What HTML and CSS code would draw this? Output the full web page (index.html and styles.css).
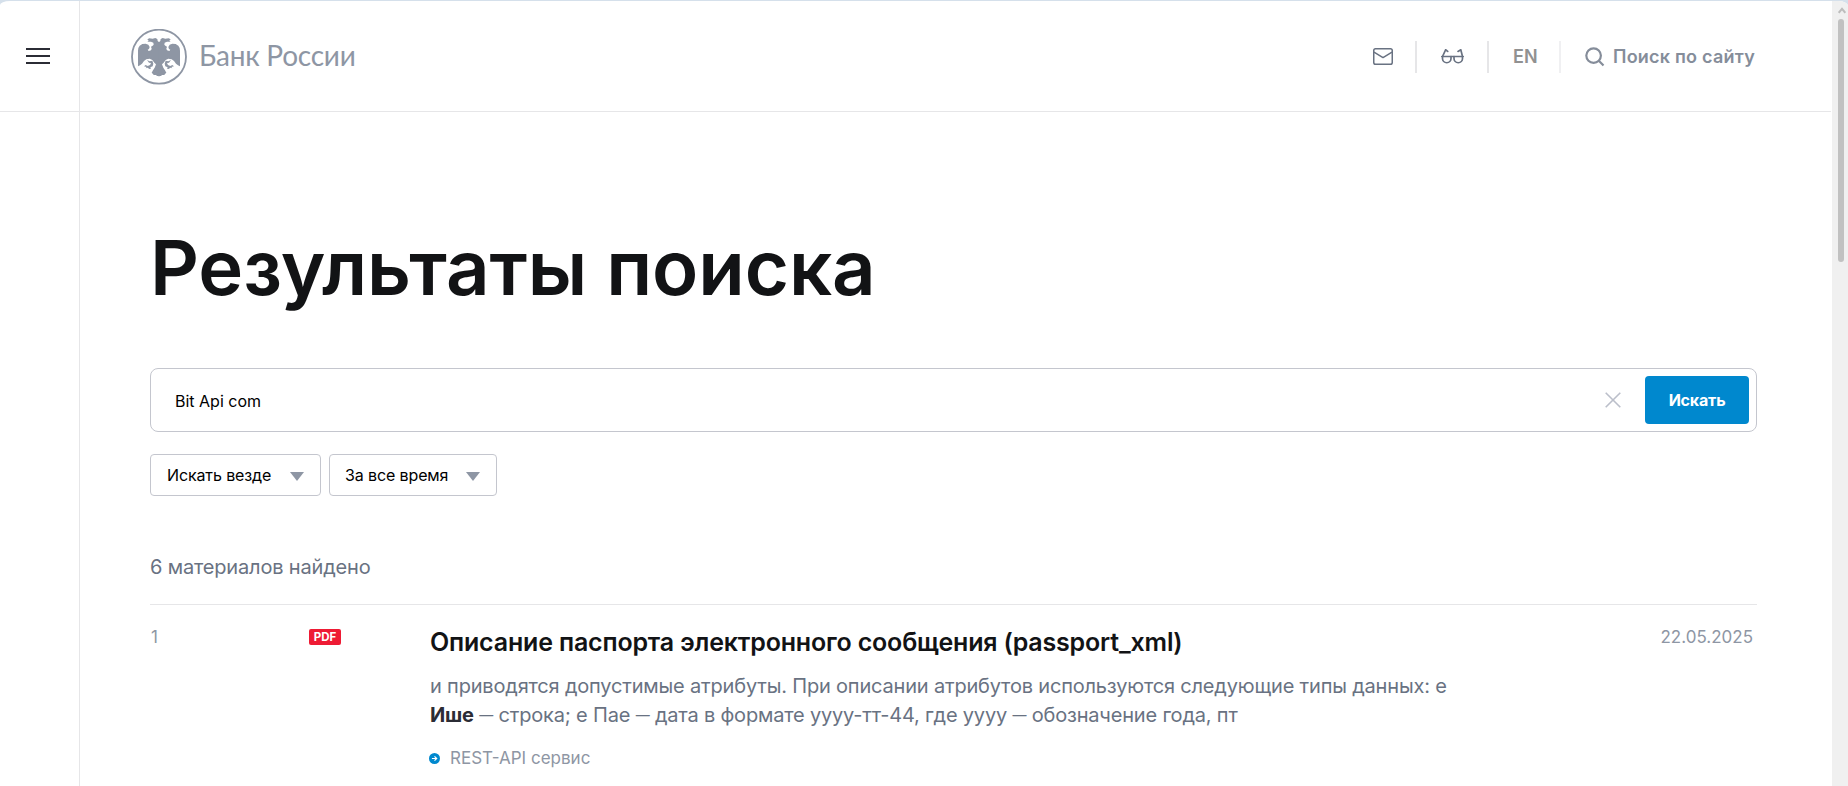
FILE: index.html
```html
<!DOCTYPE html>
<html lang="ru">
<head>
    <meta charset="UTF-8">
    <meta name="viewport" content="width=device-width, initial-scale=1.0">
    <title>Результаты поиска | Банк России</title>
    <link rel="stylesheet" href="styles.css">
</head>
<body>
    <div class="window">
        <aside class="sidebar">
            <button class="menu-button" aria-label="Меню">
                <span></span>
                <span></span>
                <span></span>
            </button>
        </aside>

        <div class="page">
            <header class="header">
                <a class="logo">
                    <svg class="logo-emblem" viewBox="0 0 168 168">
                        <circle cx="84" cy="83" r="81" fill="none" stroke="#8e96a4" stroke-width="5.5"/>
                        <g id="eagle-half" fill="#8e96a4">
                            <path d="M84.500 40 L80 36 79 30 73 27 65 29 55 28 49 31 53 35 49 38 60 38 67 41 68 47 64 51 60 53 62 59 60 64 53 66 50 62 54 60 56 54 52 47 44 44 34 45 26 50 22 57 21 65 21 112 27 109 33 104 39 96 46 91 56 89 64 93 70 101 75 106 71 116 66 124 62 131 66 135 68 138 74 138 79 141 84.500 142Z"/>
                            <path d="M48 93 L56 97 64 95 67 104 65 112 58 115 60 119 54 120 51 116 44 118 47 114 39 112 44 108 50 111 57 108 60 102 54 101Z"/>
                        </g>
                        <use href="#eagle-half" transform="translate(168 0) scale(-1 1)"/>
                    </svg>
                    <span class="logo-text">Банк России</span>
                </a>

                <nav class="header-nav">
                    <a class="nav-item nav-mail" aria-label="Обращения">
                        <svg width="20" height="17" viewBox="0 0 20 17" fill="none" stroke="#697282" stroke-width="1.5" stroke-linejoin="round">
                            <rect x="0.750" y="0.750" width="18.500" height="15.500" rx="1.800"/>
                            <path d="M1 4.200 L10 9.600 L19 4.200"/>
                        </svg>
                    </a>
                    <a class="nav-item nav-glasses" aria-label="Версия для слабовидящих">
                        <svg width="23" height="15" viewBox="0 0 23 15" fill="none" stroke="#697282" stroke-width="1.700" stroke-linecap="round" stroke-linejoin="round">
                            <path d="M0.800 7.500 H22.200"/>
                            <path d="M1.500 7.500 V9.500 A4.200 4.200 0 0 0 10 9.500 V7.500 M13 7.500 V9.500 A4.200 4.200 0 0 0 21.500 9.500 V7.500"/>
                            <path d="M1.500 7.500 L4.600 0.800 L6.700 2.400 M21.500 7.500 L19.800 0.800 L17 2.400"/>
                        </svg>
                    </a>
                    <a class="nav-item nav-lang">EN</a>
                    <a class="nav-item nav-search">
                        <svg width="20" height="20" viewBox="0 0 20 20" fill="none" stroke="#858d9a" stroke-width="2.200">
                            <circle cx="8.600" cy="8.600" r="7.300"/>
                            <path d="M13.800 13.800 L18.500 18.500"/>
                        </svg>
                        <span>Поиск по сайту</span>
                    </a>
                </nav>
            </header>

            <main class="content">
                <h1 class="title">Результаты поиска</h1>

                <form class="search-form">
                    <input type="text" class="search-input" value="Bit Api com">
                    <button type="reset" class="search-clear" aria-label="Очистить">
                        <svg width="16" height="16" viewBox="0 0 16 16" fill="none" stroke="#bbbfca" stroke-width="1.600">
                            <path d="M0.700 0.700 L15.300 15.300 M15.300 0.700 L0.700 15.300"/>
                        </svg>
                    </button>
                    <button type="button" class="search-button">Искать</button>
                </form>

                <div class="filters">
                    <div class="filter filter-place"><span>Искать везде</span><i class="arrow"></i></div>
                    <div class="filter filter-time"><span>За все время</span><i class="arrow"></i></div>
                </div>

                <div class="count">6 материалов найдено</div>

                <article class="result">
                    <div class="result-number">1</div>
                    <div class="result-type"><span class="badge">PDF</span></div>
                    <div class="result-body">
                        <h2 class="result-title">Описание паспорта электронного сообщения (passport_xml)</h2>
                        <p class="result-text">
                            и приводятся допустимые атрибуты. При описании атрибутов используются следующие типы данных: е<br>
                            <b>Ише</b> <span class="dash">—</span> строка; е Пае <span class="dash">—</span> дата в формате уууу-тт-44, где уууу <span class="dash">—</span> обозначение года, пт
                        </p>
                        <a class="result-link">
                            <svg width="11" height="11" viewBox="0 0 11 11">
                                <circle cx="5.500" cy="5.500" r="5.500" fill="#0088ce"/>
                                <path d="M2.900 5.500 H7.600 M5.500 3.300 L7.700 5.500 L5.500 7.700" fill="none" stroke="#fff" stroke-width="1.200"/>
                            </svg>
                            <span>REST-API сервис</span>
                        </a>
                    </div>
                    <time class="result-date">22.05.2025</time>
                </article>
            </main>
        </div>

        <div class="scrollbar">
            <svg class="scrollbar-arrow" width="8" height="7" viewBox="0 0 8 7" fill="none" stroke="#bdbdbd" stroke-width="2">
                <path d="M0.700 5.800 L4 1.800 L7.300 5.800"/>
            </svg>
            <div class="scrollbar-thumb"></div>
        </div>
    </div>
</body>
</html>
```
FILE: styles.css
```css
* {
    margin: 0;
    padding: 0;
    box-sizing: border-box;
}

body {
    height: 100vh;
    padding-top: 1px;
    overflow: hidden;
    background: #d5e0eb;
    font-family: Inter, 'Liberation Sans', sans-serif;
    color: #121315;
}

button {
    border: none;
    background: none;
    font-family: inherit;
    cursor: pointer;
}

svg {
    display: block;
    flex: none;
}

.window {
    display: flex;
    height: 785px;
    background: #fff;
    border-radius: 10px 10px 0 0 / 4px 5px 0 0;
    overflow: hidden;
}

/* Sidebar */
.sidebar {
    width: 80px;
    flex: none;
    border-right: 1px solid #e6e6e8;
}

.menu-button {
    display: flex;
    flex-direction: column;
    gap: 5px;
    width: 79px;
    height: 111px;
    padding: 47px 29px 0 26px;
    border-bottom: 1px solid #e6e6e8;
}

.menu-button span {
    height: 2px;
    background: #2b2c35;
}

/* Header */
.page {
    flex: 1;
    min-width: 0;
}

.header {
    display: flex;
    justify-content: space-between;
    height: 111px;
    margin-right: 1px;
    padding: 0 76px 0 51px;
    border-bottom: 1px solid #e6e6e8;
}

.logo {
    display: flex;
    align-items: center;
    gap: 12px;
    height: 111px;
}

.logo-emblem {
    width: 56px;
    height: 56px;
}

.logo-text {
    padding-bottom: 3px;
    font-family: Lato, 'Open Sans', sans-serif;
    font-size: 28px;
    line-height: 36px;
    letter-spacing: -0.25px;
    white-space: nowrap;
    color: #8e96a4;
}

.header-nav {
    display: flex;
    align-items: center;
    height: 111px;
}

.nav-item {
    display: flex;
    align-items: center;
    height: 32px;
    font-size: 18px;
    font-weight: 600;
    line-height: 32px;
    white-space: nowrap;
}

.nav-mail {
    width: 44px;
    border-right: 2px solid #e6e6e8;
}

.nav-glasses {
    width: 72px;
    padding-left: 24px;
    border-right: 2px solid #e6e6e8;
}

.nav-lang {
    width: 72px;
    padding-left: 24px;
    border-right: 2px solid #f0f0f2;
    color: #919191;
}

.nav-search {
    width: 194px;
    gap: 8px;
    padding-left: 24px;
    letter-spacing: 0.22px;
    color: #858d9a;
}

/* Content */
.content {
    padding: 110px 75px 0 70px;
}

.title {
    font-size: 76px;
    font-weight: 600;
    line-height: 90px;
    letter-spacing: -0.1px;
    white-space: nowrap;
}

.search-form {
    display: flex;
    align-items: center;
    height: 64px;
    margin-top: 56px;
    padding-right: 7px;
    border: 1px solid #c4c6ce;
    border-radius: 8px;
}

.search-input {
    flex: 1;
    height: 60px;
    padding: 1px 24px 0;
    border: none;
    outline: none;
    background: transparent;
    font-family: inherit;
    font-size: 16px;
    color: #000;
}

.search-clear {
    margin-right: 24px;
}

.search-button {
    width: 104px;
    height: 48px;
    border-radius: 4px;
    background: #0088ce;
    color: #fff;
    font-size: 16px;
    font-weight: 700;
    letter-spacing: -0.2px;
}

.filters {
    display: flex;
    gap: 8px;
    margin-top: 22px;
}

.filter {
    display: flex;
    align-items: center;
    justify-content: space-between;
    height: 42px;
    padding: 0 16px;
    border: 1px solid #c4c6ce;
    border-radius: 4px;
    font-size: 16px;
    letter-spacing: -0.12px;
    white-space: nowrap;
    color: #000;
}

.filter-place {
    width: 171px;
}

.filter-time {
    width: 168px;
    padding-left: 15px;
}

.arrow {
    border: 7px solid transparent;
    border-top: 9px solid #8e96a4;
    border-bottom: 0;
    margin-top: 2px;
}

.count {
    margin-top: 57px;
    padding-bottom: 23px;
    border-bottom: 1px solid #e6e6e8;
    font-size: 20px;
    line-height: 28px;
    letter-spacing: -0.17px;
    color: #697282;
}

/* Search results */
.result {
    display: flex;
    align-items: flex-start;
    padding-top: 22px;
}

.result-number {
    width: 159px;
    padding-left: 1px;
    font-size: 17px;
    line-height: 20px;
    color: #8e96a4;
}

.result-type {
    width: 121px;
    padding-top: 2px;
}

.badge {
    display: block;
    width: 32px;
    height: 16px;
    border-radius: 2px;
    background: #ee1b34;
    color: #fff;
    font-size: 11.5px;
    font-weight: 700;
    line-height: 16px;
    text-align: center;
}

.result-body {
    flex: 1;
}

.result-title {
    font-size: 25px;
    font-weight: 600;
    line-height: 30px;
    letter-spacing: -0.175px;
    white-space: nowrap;
}

.result-text {
    margin-top: 15px;
    font-size: 20px;
    line-height: 29px;
    letter-spacing: -0.186px;
    white-space: nowrap;
    color: #697282;
}

.result-text b {
    font-weight: 700;
    color: #2b2c35;
}

.result-text .dash {
    font-size: 14px;
    line-height: 1;
    vertical-align: 2px;
}

.result-link {
    display: flex;
    align-items: center;
    gap: 10px;
    margin: 17px 0 0 -1px;
    font-size: 17px;
    line-height: 22px;
    color: #8e96a4;
}

.result-date {
    padding-right: 4px;
    font-size: 17px;
    line-height: 20px;
    color: #8e96a4;
}

/* Scrollbar */
.scrollbar {
    width: 16px;
    flex: none;
    padding: 6px 4px 0 6px;
    background: #f0f0f0;
}

.scrollbar-thumb {
    width: 6px;
    height: 243px;
    margin-top: 5px;
    border-radius: 3px;
    background: #c1c1c1;
}
```
